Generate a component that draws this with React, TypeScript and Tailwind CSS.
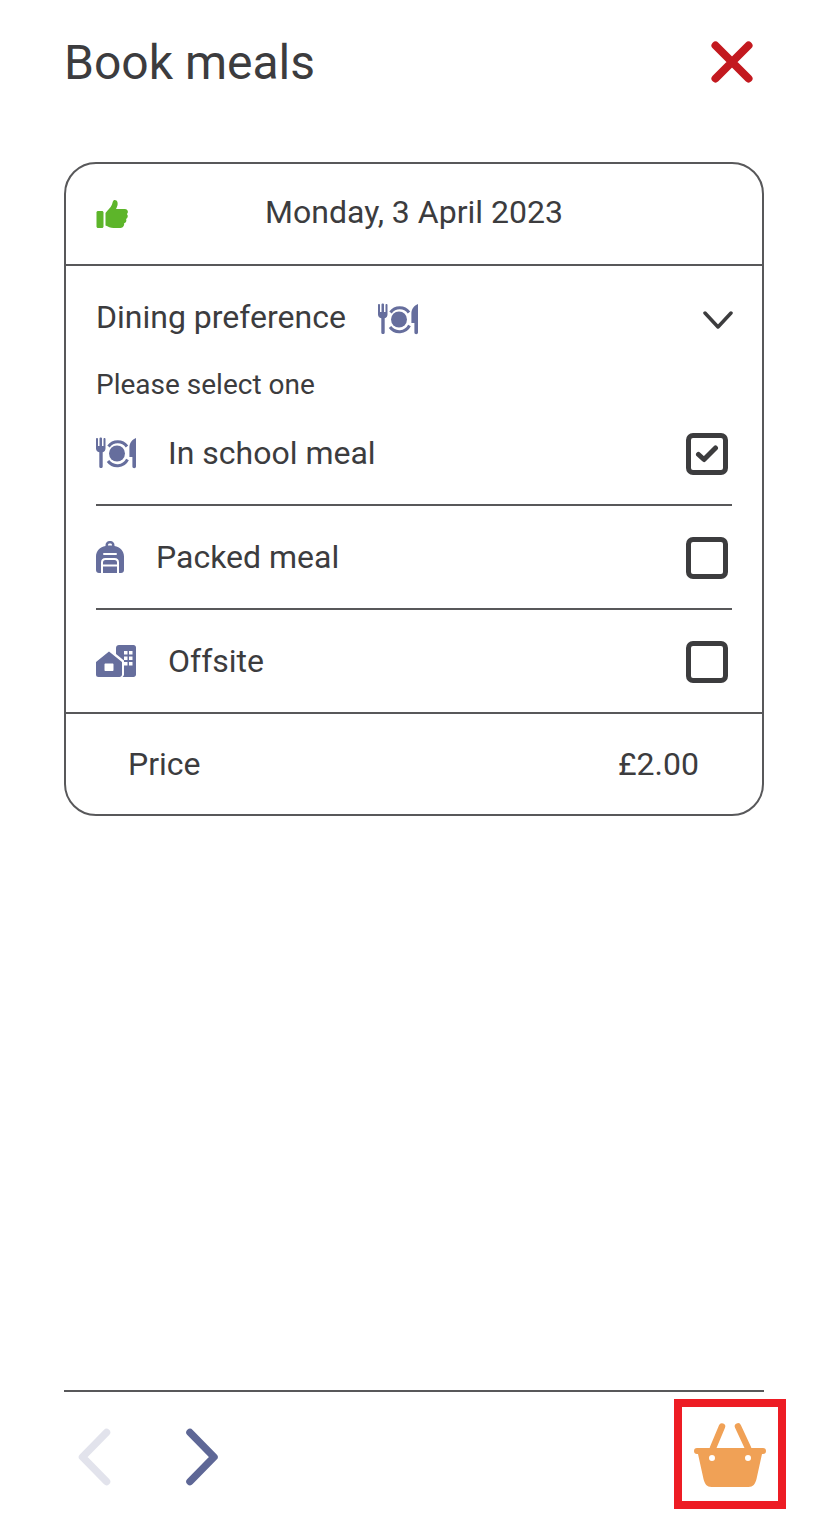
import { ReactNode } from 'react';

const PlateIcon = () => (
  <svg viewBox="0 0 40 32" className="w-[40px] h-[32px] text-[#666e9d]" fill="currentColor">
    <path d="M0 2c0-1.300 2-1.300 2 0v7h1.500V1.500c0-1.300 2.500-1.300 2.500 0V9h1.500V2c0-1.300 2-1.300 2 0v9.500c0 2-1.200 3.200-2.800 3.800V29.500c0 2-3.400 2-3.400 0V15.300C1.200 14.700 0 13.500 0 11.500z" />
    <path d="M40 1v28.500c0 2.200-3.600 2.200-3.600 0V20h-3V11C33.400 6 36 2.500 40 1z" />
    <circle cx="21" cy="16.500" r="8" />
    <path d="M12.500 9.500A11.500 11.500 0 0 1 31 9.500M12 24A11.500 11.500 0 0 0 31.500 22.500" fill="none" stroke="currentColor" strokeWidth="3" />
  </svg>
);

const BagIcon = () => (
  <svg viewBox="0 0 28 32" className="w-[28px] h-[32px] text-[#666e9d]">
    <path fill="currentColor" fillRule="evenodd" d="M9.500 5V4c0-2.200 1.800-4 4-4h1c2.200 0 4 1.800 4 4v1C24 6 28 10 28 15.500V29c0 1.700-1.300 3-3 3H3c-1.700 0-3-1.300-3-3V15.500C0 10 4 6 9.500 5zm2.500-.4h4V4c0-.8-.7-1.500-1.500-1.500h-1c-.8 0-1.500.7-1.500 1.500z" />
    <path fill="#fff" d="M8 12h12a1 1 0 0 1 0 2H8a1 1 0 0 1 0-2z" />
    <path fill="none" stroke="#fff" strokeWidth="2" d="M6 32V21.500c0-2 1.300-3.500 3.500-3.500h9c2.200 0 3.500 1.500 3.500 3.500V32M6 24.500h16" />
  </svg>
);

const BuildingIcon = () => (
  <svg viewBox="0 0 40 32" className="w-[40px] h-[32px] text-[#666e9d]" fill="currentColor">
    <path fillRule="evenodd" d="M13 6.500 26 17v12.500c0 1.400-1.100 2.500-2.500 2.500h-21A2.500 2.500 0 0 1 0 29.500V17zM9.500 18.500c-.6 0-1 .4-1 1V25c0 .6.400 1 1 1h7c.6 0 1-.4 1-1v-5.500c0-.6-.4-1-1-1z" />
    <path fillRule="evenodd" d="M23 0h14.500C38.900 0 40 1.100 40 2.500v27c0 1.400-1.100 2.500-2.500 2.500H26.500c.8-.7 1.500-1.500 1.500-2.500V15.500L20 9V3c0-1.700 1.300-3 3-3zm5 6v3.500h3.500V6zm5 0v3.500h3.500V6zm-5 5.500V15h3.500v-3.500zm5 0V15h3.500v-3.500zM28 17v3.500h3.500V17zm5 0v3.500h3.500V17z" />
  </svg>
);

const Check = ({ checked }: { checked?: boolean }) => (
  <div className="w-[42px] h-[42px] border-[5px] border-[#3c3c3e] rounded-[7px] flex items-center justify-center">
    {checked && (
      <svg viewBox="0 0 24 20" className="w-[24px] h-[20px]" fill="none" stroke="#3c3c3e" strokeWidth="5" strokeLinecap="round" strokeLinejoin="round">
        <path d="M3.500 10.500 9 15.500 20.500 4" />
      </svg>
    )}
  </div>
);

const OptionRow = ({ icon, label, gap, height, checked, divider }: { icon: ReactNode, label: string, gap: string, height: string, checked?: boolean, divider?: boolean }) => (
  <div className={`mx-[30px] ${height} flex items-center justify-between ${divider ? 'border-b-2 border-[#58585a]' : ''}`}>
    <div className={`flex items-center ${gap}`}>
      {icon}
      <span className="text-[32px] leading-none">{label}</span>
    </div>
    <div className="mr-[4px] mt-[2px]">
      <Check checked={checked} />
    </div>
  </div>
);

export default function App() {
  return (
    <div className="h-[1522px] w-[828px] bg-white flex flex-col text-[#3c3c3e] font-['Roboto',sans-serif] overflow-hidden">
      <header className="pl-[64px] pr-[75px] h-[162px] pb-[38px] flex items-center justify-between">
        <h1 className="text-[48px] leading-none font-normal mt-[2px]">Book meals</h1>
        <svg viewBox="0 0 42 42" className="w-[42px] h-[42px]" fill="none" stroke="#c3191f" strokeWidth="8" strokeLinecap="round">
          <path d="M4.500 4.500 37.500 37.500M37.500 4.500 4.500 37.500" />
        </svg>
      </header>

      <section className="mx-[64px] w-[700px] h-[654px] border-2 border-[#58585a] rounded-[32px] flex flex-col">
        <div className="h-[102px] shrink-0 border-b-2 border-[#58585a] relative flex items-center justify-center">
          <svg viewBox="0 0 32 32" className="absolute left-[30px] top-[34px] w-[33px] h-[32px]" fill="#5db52a">
            <path d="M0 14.500c0-1 .8-1.500 1.500-1.500h4c.8 0 1.500.6 1.500 1.500v14c0 .9-.7 1.500-1.500 1.500h-4C.7 30 0 29.400 0 28.500z" />
            <path d="M9 15c2-3 5-5 6.500-8.500.7-1.700.8-4.500 2.700-4.500 2.800 0 3.300 3 2.800 5.300-.3 1.500-1 2.700-1.500 3.700h9c2.600 0 4 3.300 1.900 5 1.500 1.700 1 4-.8 5 .8 2-.2 3.800-2 4.300.5 2-1 4.700-3.600 4.700H17c-3 0-5.500-1.500-8-2.500z" />
          </svg>
          <span className="text-[32px] leading-none -mt-[4px]">Monday, 3 April 2023</span>
        </div>

        <div className="flex-1 flex flex-col">
          <div className="h-[105px] shrink-0 pl-[30px] pr-[29px] flex items-center justify-between">
            <div className="flex items-center gap-[32px]">
              <span className="text-[32px] leading-none -mt-[4px]">Dining preference</span>
              <PlateIcon />
            </div>
            <svg viewBox="0 0 30 18" className="w-[30px] h-[18px] mt-[2px]" fill="none" stroke="#3c3c3e" strokeWidth="3.500" strokeLinecap="round" strokeLinejoin="round">
              <path d="M2 2 15 16 28 2" />
            </svg>
          </div>
          <p className="pl-[30px] text-[28px] leading-none h-[31px]">Please select one</p>
          <OptionRow icon={<PlateIcon />} label="In school meal" gap="gap-[32px]" height="h-[104px]" checked divider />
          <OptionRow icon={<BagIcon />} label="Packed meal" gap="gap-[32px]" height="h-[104px]" divider />
          <OptionRow icon={<BuildingIcon />} label="Offsite" gap="gap-[32px]" height="h-[102px]" />
        </div>

        <div className="h-[102px] shrink-0 border-t-2 border-[#58585a] pl-[62px] pr-[63px] flex items-center justify-between">
          <span className="text-[32px] leading-none">Price</span>
          <span className="text-[32px] leading-none">£2.00</span>
        </div>
      </section>

      <footer className="mt-auto mx-[64px] w-[700px] h-[132px] border-t-2 border-[#58585a] flex items-start justify-between">
        <div className="flex items-center gap-[71px] pl-[13px] pt-[35px]">
          <svg viewBox="0 0 36 60" className="w-[36px] h-[60px]" fill="none" stroke="#e2e3ec" strokeWidth="7.500" strokeLinecap="round" strokeLinejoin="round">
            <path d="M29.500 5.500 5.500 30l24 24.500" />
          </svg>
          <svg viewBox="0 0 36 60" className="w-[36px] h-[60px]" fill="none" stroke="#5e6796" strokeWidth="7.500" strokeLinecap="round" strokeLinejoin="round">
            <path d="M6 5.500 30 30 6 54.500" />
          </svg>
        </div>
        <div className="w-[112px] h-[110px] mt-[7px] -mr-[22px] border-[8px] border-[#ed1c24] flex items-center justify-center">
          <svg viewBox="0 0 72 66" className="w-[72px] h-[66px]" fill="#f0a156">
            <path d="M28 5.500 19 27M44 5.500 54 27" fill="none" stroke="#f0a156" strokeWidth="6.500" strokeLinecap="round" />
            <path fillRule="evenodd" d="M3 27h66a3 3 0 0 1 0 6h-1L62.500 58c-1.200 5-3.500 8-8 8h-37c-4.500 0-6.800-3-8-8L4 33H3a3 3 0 0 1 0-6zm15 7a3 3 0 1 0 0 6 3 3 0 0 0 0-6zm36 0a3 3 0 1 0 0 6 3 3 0 0 0 0-6z" />
          </svg>
        </div>
      </footer>
    </div>
  );
}
